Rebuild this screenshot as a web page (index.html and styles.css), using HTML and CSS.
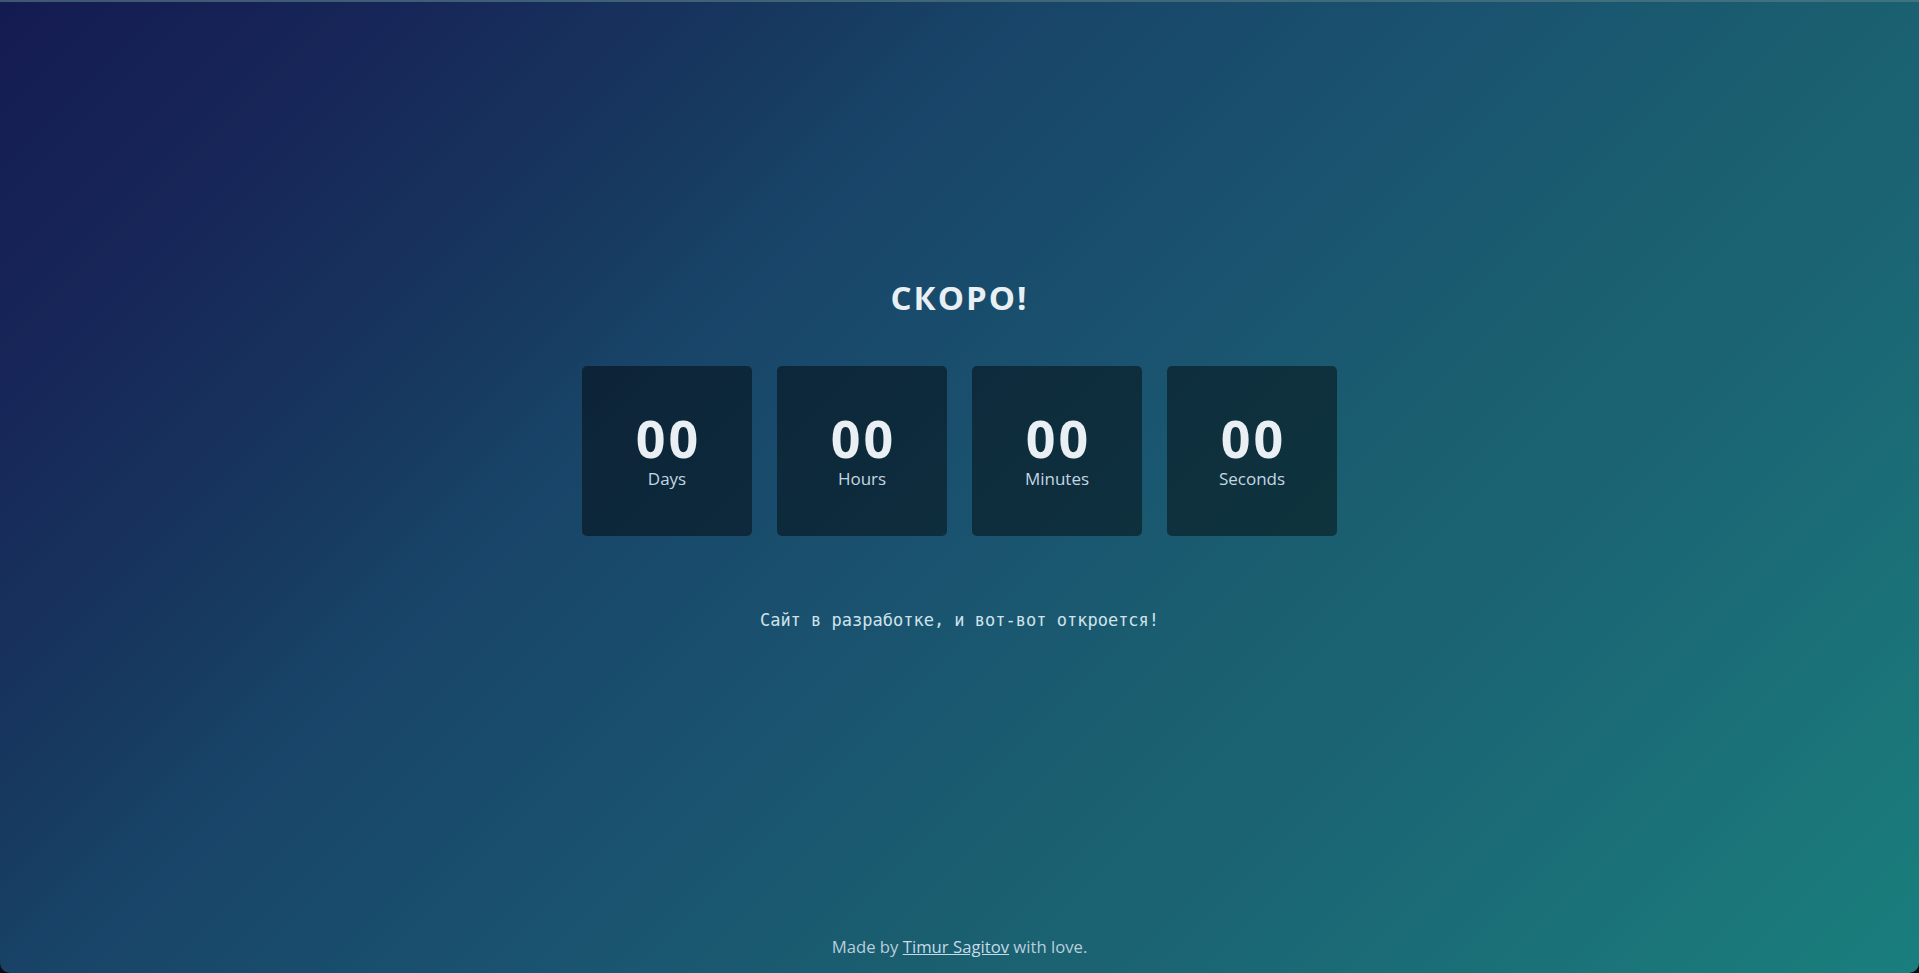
FILE: index.html
```html
<!DOCTYPE html>
<html lang="ru">
<head>
<meta charset="utf-8">
<title>Скоро!</title>
<link rel="stylesheet" href="styles.css">
</head>
<body>
<div class="page">
  <main class="main">
    <h1 class="title">СКОРО!</h1>
    <div class="countdown">
      <div class="unit"><span class="num">00</span><span class="label">Days</span></div>
      <div class="unit"><span class="num">00</span><span class="label">Hours</span></div>
      <div class="unit"><span class="num">00</span><span class="label">Minutes</span></div>
      <div class="unit"><span class="num">00</span><span class="label">Seconds</span></div>
    </div>
    <p class="subtitle">Сайт в разработке, и вот-вот откроется!</p>
  </main>
  <footer class="footer">Made by <a class="link" href="#">Timur Sagitov</a> with love.</footer>
</div>
</body>
</html>
```
FILE: styles.css
```css
html, body {
  margin: 0;
  padding: 0;
  height: 100%;
  background: #0b0d12;
}
body {
  font-family: "Open Sans", "Noto Sans", sans-serif;
  color: #e6eef4;
}
.page {
  box-sizing: border-box;
  height: 100vh;
  display: flex;
  flex-direction: column;
  border-top: 2px solid rgba(95, 105, 130, 0.55);
  border-radius: 0 0 10px 10px;
  overflow: hidden;
  background: linear-gradient(135deg,
    #141b50 0%,
    #172658 14%,
    #173a60 29%,
    #184468 35%,
    #1a5570 54%,
    #1a6070 66%,
    #1b6474 73%,
    #1a7b7b 96%,
    #1a7e7e 100%);
}
.main {
  flex: 1;
  display: flex;
  flex-direction: column;
  align-items: center;
  padding-top: 276px;
}
.title {
  margin: 0;
  font-size: 33px;
  line-height: 40px;
  font-weight: 700;
  letter-spacing: 2px;
  color: #e8f0f5;
}
.countdown {
  margin-top: 48px;
  display: flex;
  gap: 25px;
}
.unit {
  width: 170px;
  height: 170px;
  border-radius: 5px;
  background: rgba(0, 0, 0, 0.45);
  display: flex;
  flex-direction: column;
  align-items: center;
  justify-content: center;
  gap: 6px;
}
.num {
  font-size: 52px;
  line-height: 50px;
  font-weight: 700;
  letter-spacing: 3px;
  padding-left: 3px;
  color: #e9eff3;
}
.label {
  font-size: 17px;
  line-height: 20px;
  color: #c3d7e2;
}
.subtitle {
  margin: 72px 0 0;
  font-family: "DejaVu Sans Mono", "Liberation Mono", monospace;
  font-size: 17px;
  line-height: 24px;
  color: #cfe3ea;
}
.footer {
  text-align: center;
  font-size: 16.7px;
  line-height: 24px;
  padding-bottom: 14px;
  color: #b8cfdb;
}
.link {
  color: #c6dbe6;
  text-decoration: underline;
}
```
